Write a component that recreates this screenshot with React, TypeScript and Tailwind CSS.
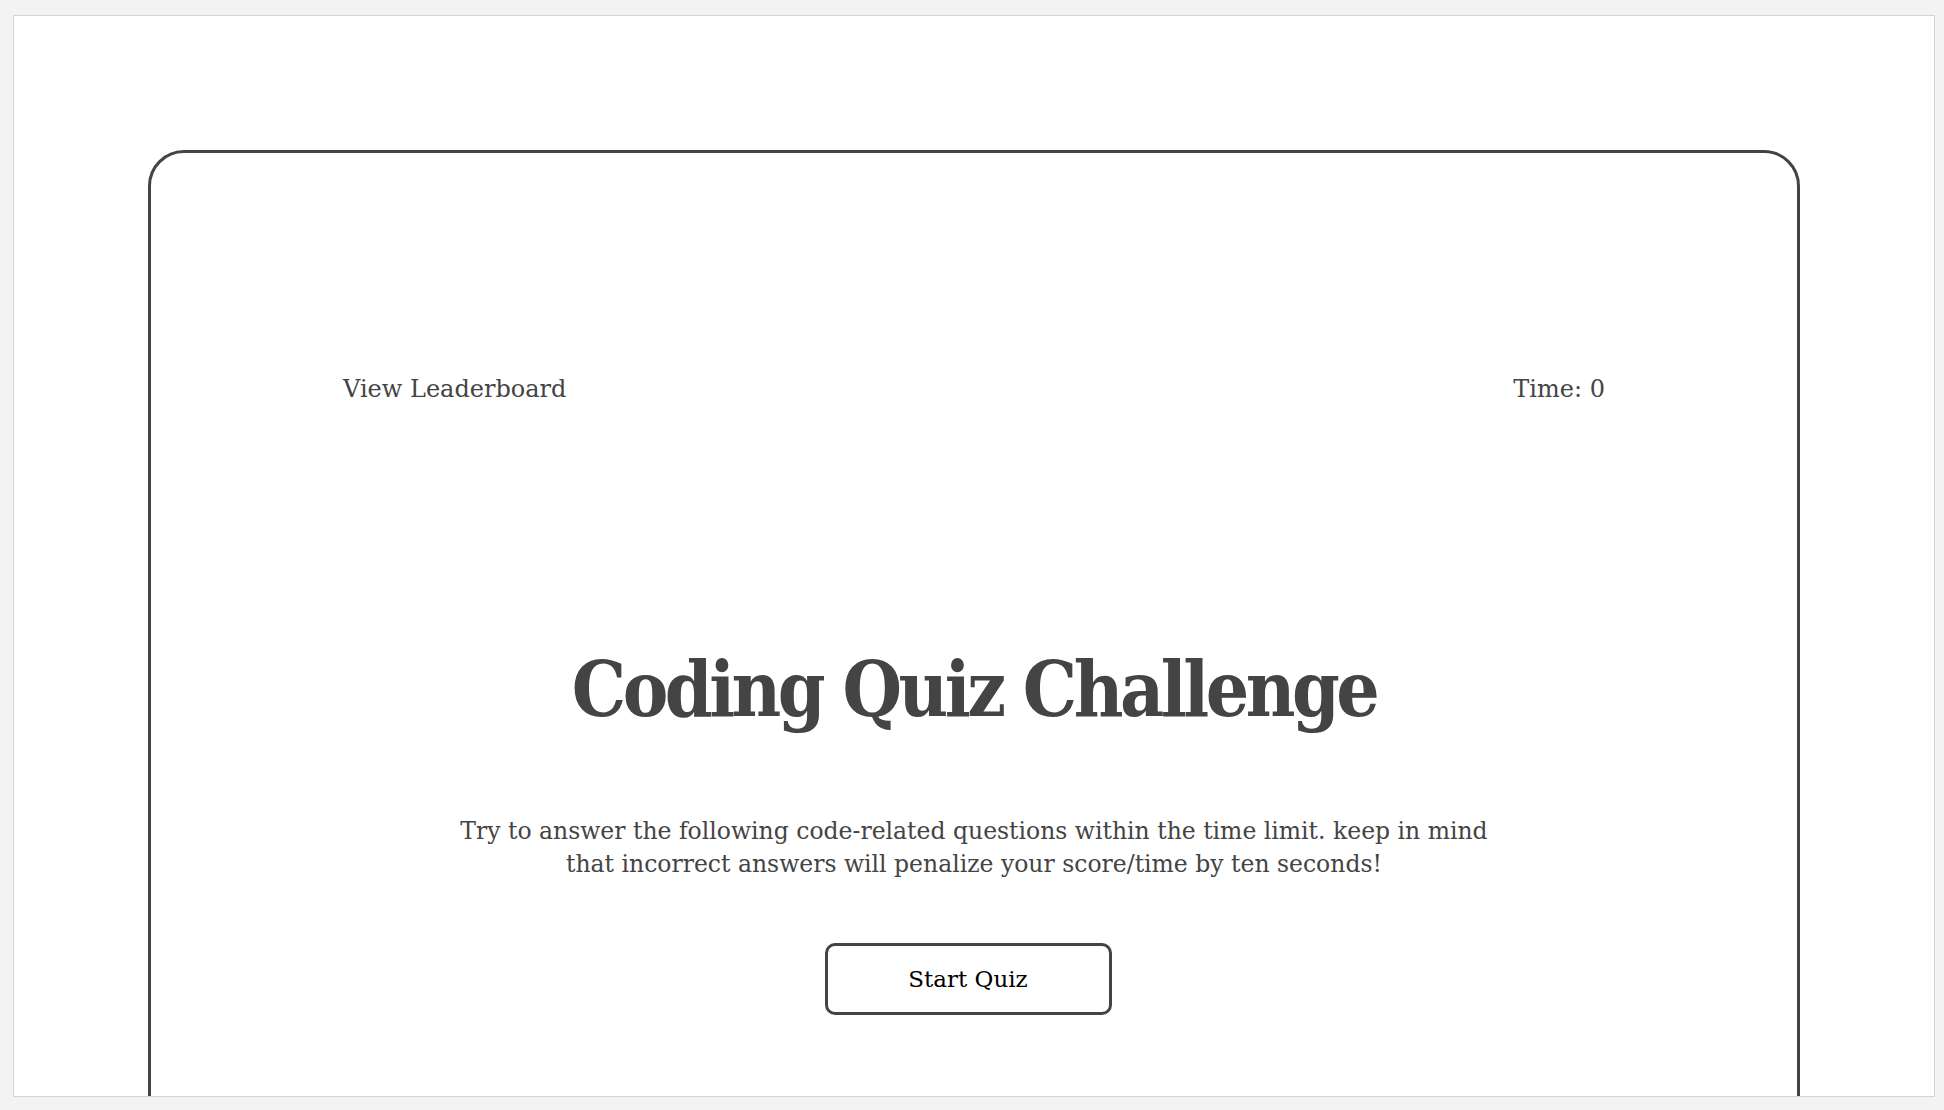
import React from "react";

export default function App() {
  return (
    <div className="h-[1110px] w-[1944px] bg-[#f3f3f3] pt-[15px] pl-[13px] pr-[9px] pb-[13px] overflow-hidden">
      <div className="h-full w-full border border-[#d4d4d4] bg-white overflow-hidden">
        <div className="mx-[134px] mt-[134px] h-[1200px] rounded-[36px] border-[3px] border-[#444444] pt-[220px] text-[#444444] [font-family:'DejaVu_Serif',serif]">
          <div className="flex justify-between px-[192px] text-[24px] leading-[32px]">
            <a className="cursor-pointer">View Leaderboard</a>
            <span>Time: 0</span>
          </div>
          <div className="flex flex-col items-center">
            <h1 className="mt-[245px] text-[76px] leading-[80px] font-bold tracking-[-3.5px] [font-family:'DejaVu_Serif_Condensed','DejaVu_Serif',serif]">
              Coding Quiz Challenge
            </h1>
            <p className="mt-[85px] text-center text-[23.5px] leading-[33px]">
              Try to answer the following code-related questions within the time limit. keep in mind
              <br />
              that incorrect answers will penalize your score/time by ten seconds!
            </p>
            <button className="mt-[62px] mr-[12px] h-[72px] w-[287px] rounded-[10px] border-[3px] border-[#444444] bg-white text-[23px] text-black [font-family:'DejaVu_Serif',serif]">
              Start Quiz
            </button>
          </div>
        </div>
      </div>
    </div>
  );
}
